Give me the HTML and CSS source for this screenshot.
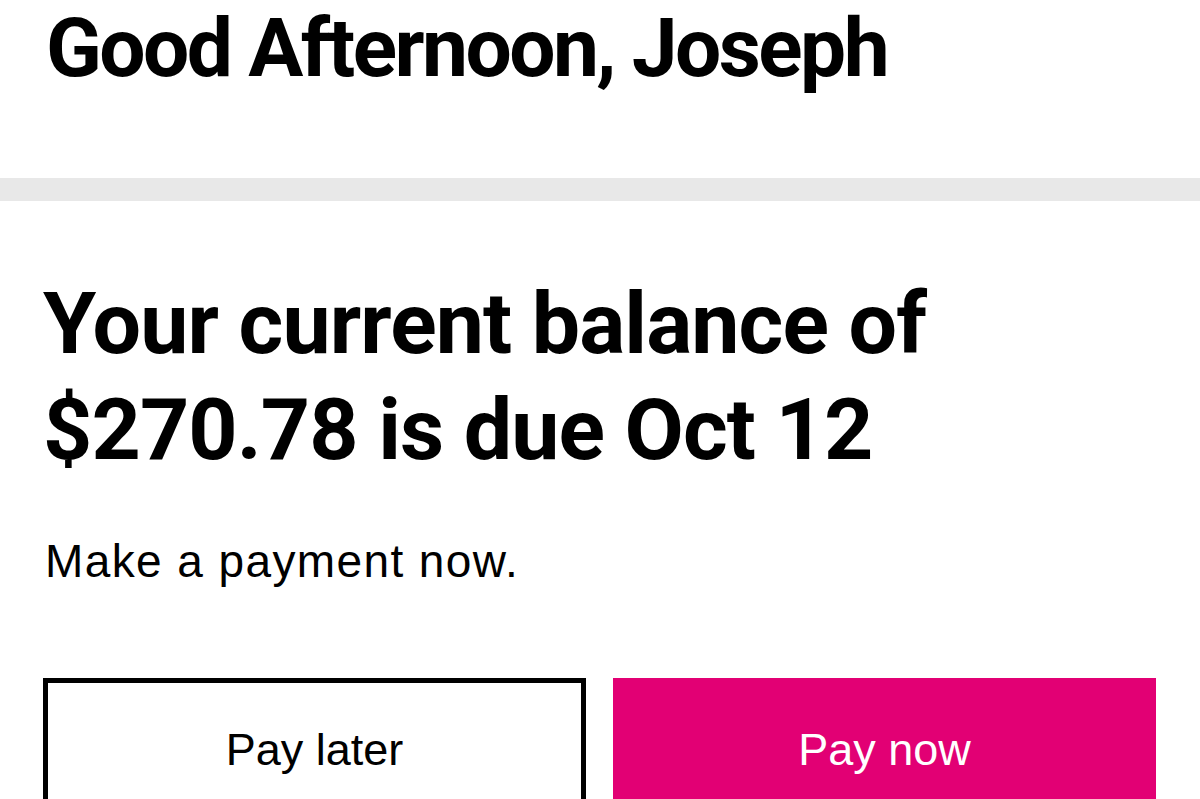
FILE: index.html
```html
<!DOCTYPE html>
<html lang="en">
<head>
  <meta charset="UTF-8" />
  <meta name="viewport" content="width=device-width, initial-scale=1" />
  <title>Home</title>
  <link rel="stylesheet" href="styles.css">
</head>
<body>

<header class="greeting">
  <h1>Good Afternoon, Joseph</h1>
</header>

<div class="divider"></div>

<section class="balance">
  <h2>Your current balance of $270.78 is due Oct 12</h2>
  <p>Make a payment now.</p>
  <div class="actions">
    <button class="btn btn-outline">Pay later</button>
    <button class="btn btn-primary">Pay now</button>
  </div>
</section>

</body>
</html>
```

FILE: styles.css
```css
body {
  margin: 0;
  background: #fff;
  color: #000;
  font-family: "Liberation Sans", Arial, sans-serif;
  overflow: hidden;
}
.greeting {
  padding: 3px 44px 0 46px;
  height: 175px;
}
.greeting h1 {
  margin: 0;
  font-family: Roboto, "Liberation Sans", sans-serif;
  font-weight: 700;
  font-size: 82px;
  line-height: 90px;
  letter-spacing: -2.55px;
}
.divider {
  height: 23px;
  background-color: #e8e8e8;
}
.balance {
  padding: 70px 44px 0 43px;
}
.balance h2 {
  margin: 0;
  font-family: Roboto, "Liberation Sans", sans-serif;
  font-weight: 700;
  font-size: 86px;
  line-height: 106px;
  letter-spacing: -0.9px;
  max-width: 960px;
}
.balance p {
  margin: 50px 0 0 2px;
  font-size: 46px;
  line-height: 56px;
  letter-spacing: 1.4px;
}
.actions {
  display: grid;
  grid-template-columns: 1fr 1fr;
  gap: 27px;
  margin-top: 89px;
}
.btn {
  height: 144px;
  box-sizing: border-box;
  padding: 0;
  font-family: "Liberation Sans", Arial, sans-serif;
  font-size: 45px;
  border: none;
  border-radius: 0;
  cursor: pointer;
}
.btn-outline {
  background: #fff;
  color: #000;
  border: 5px solid #000;
}
.btn-primary {
  background-color: #e20074;
  color: #fff;
}
```
